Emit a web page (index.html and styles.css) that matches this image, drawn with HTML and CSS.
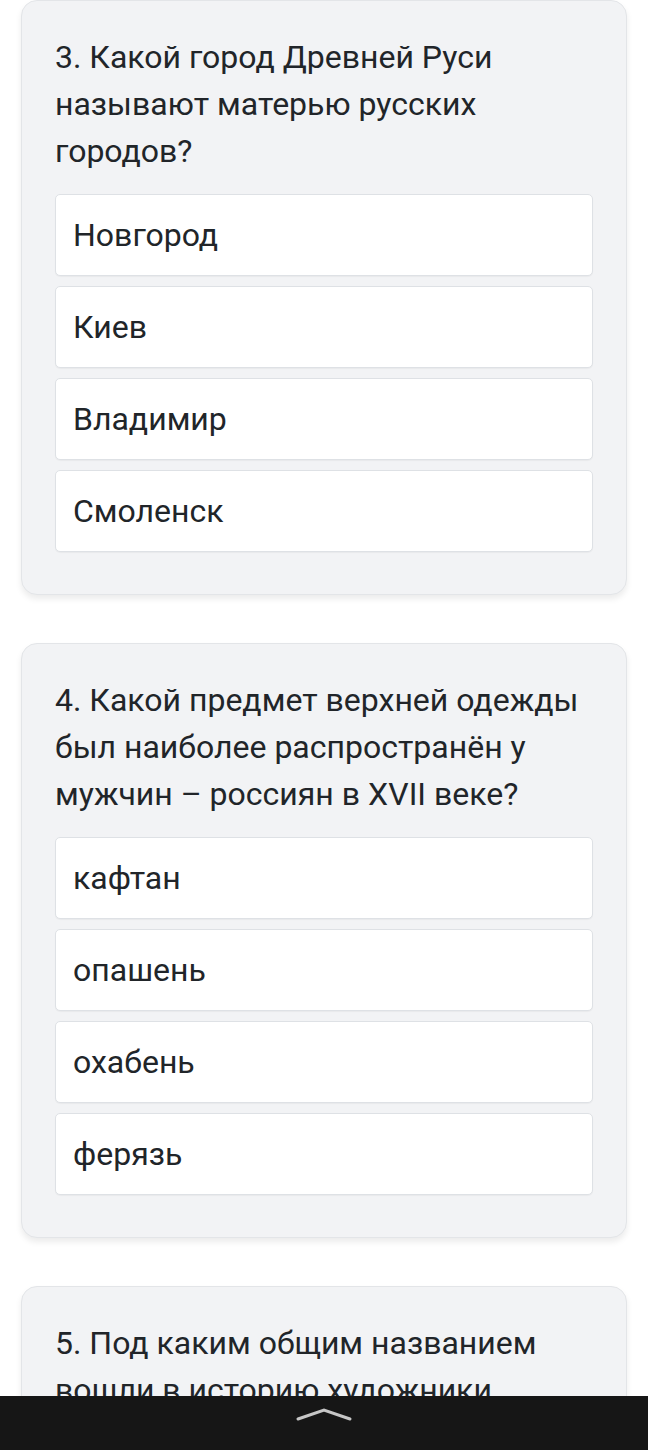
FILE: index.html
```html
<!DOCTYPE html>
<html lang="ru">
<head>
  <meta charset="UTF-8">
  <meta name="viewport" content="width=device-width, initial-scale=1.0">
  <title>Тест по истории</title>
  <link rel="stylesheet" href="styles.css">
</head>
<body>

<div class="quiz">
  <div class="question-card">
    <p class="question">3. Какой город Древней Руси называют матерью русских городов?</p>
    <div class="answers">
      <div class="answer">Новгород</div>
      <div class="answer">Киев</div>
      <div class="answer">Владимир</div>
      <div class="answer">Смоленск</div>
    </div>
  </div>

  <div class="question-card">
    <p class="question">4. Какой предмет верхней одежды был наиболее распространён у мужчин – россиян в XVII веке?</p>
    <div class="answers">
      <div class="answer">кафтан</div>
      <div class="answer">опашень</div>
      <div class="answer">охабень</div>
      <div class="answer">ферязь</div>
    </div>
  </div>

  <div class="question-card">
    <p class="question">5. Под каким общим названием вошли в историю художники второй половины XIX века?</p>
    <div class="answers">
      <div class="answer">передвижники</div>
      <div class="answer">мирискусники</div>
    </div>
  </div>
</div>

<div class="nav-bar">
  <svg class="nav-chevron" width="56" height="14" viewBox="0 0 56 14">
    <path d="M2 11 L28 2 L54 11" fill="none" stroke="#c6c6c6" stroke-width="3" stroke-linecap="round" stroke-linejoin="miter"/>
  </svg>
</div>

</body>
</html>
```

FILE: styles.css
```css
:root {
  --card-bg: #f2f3f5;
  --card-border: #e3e5e8;
  --answer-bg: #ffffff;
  --answer-border: #dee1e5;
  --text-primary: #212529;
  --bar-bg: #161616;
}

body {
  font-family: Roboto, 'Noto Sans', sans-serif;
  background-color: #ffffff;
  color: var(--text-primary);
  margin: 0;
  padding: 0;
}

.quiz {
  display: flex;
  flex-direction: column;
  gap: 48px;
  padding: 0 21px 120px;
}

.question-card {
  background-color: var(--card-bg);
  border: 1px solid var(--card-border);
  border-radius: 16px;
  padding: 33px 33px 42px;
  box-shadow: 0 4px 6px rgba(0, 0, 0, 0.08);
}

.question {
  font-size: 32px;
  line-height: 47px;
  margin: 0 0 19px;
}

.answers {
  display: flex;
  flex-direction: column;
  gap: 10px;
}

.answer {
  background-color: var(--answer-bg);
  border: 1px solid var(--answer-border);
  border-radius: 5px;
  height: 80px;
  padding: 0 17px;
  display: flex;
  align-items: center;
  font-size: 32px;
  box-shadow: 0 1px 1px rgba(0, 0, 0, 0.04);
}

.nav-bar {
  position: fixed;
  left: 0;
  right: 0;
  bottom: 0;
  height: 54px;
  background-color: var(--bar-bg);
  display: flex;
  justify-content: center;
}

.nav-chevron {
  margin-top: 12px;
}
```
